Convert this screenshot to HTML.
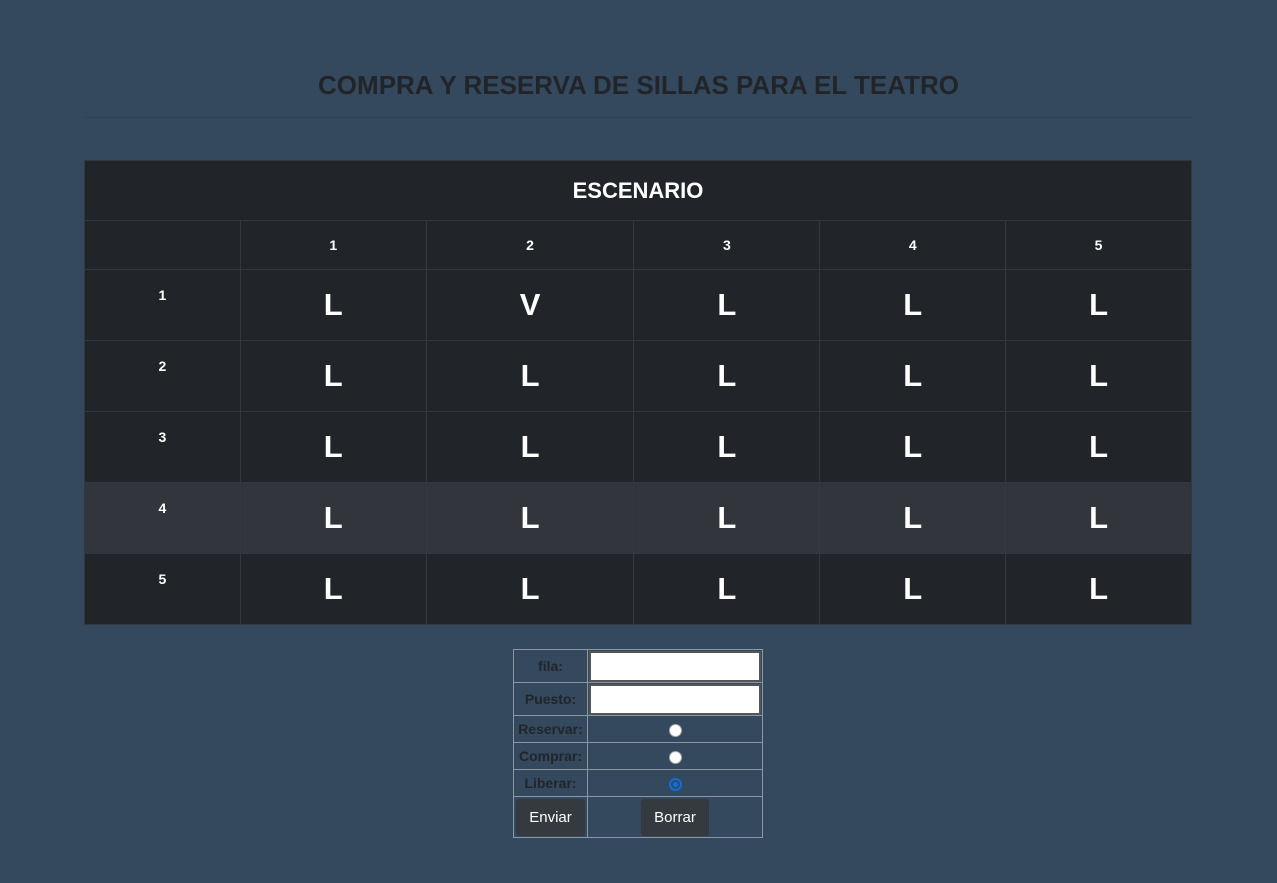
<!DOCTYPE html>
<html><head><meta charset="utf-8"><style>
html,body{margin:0;padding:0;background:#34495e;width:1277px;height:883px;overflow:hidden;font-family:"Liberation Sans",sans-serif;}
.title{position:absolute;left:0;width:1277px;top:70px;text-align:center;font-weight:bold;font-size:26px;color:#212529;}
.title span{display:inline-block;white-space:nowrap;}
.hr{position:absolute;left:84px;width:1108px;top:117px;height:1px;background:#2e4155;}
table{border-collapse:collapse;}
.main{position:absolute;left:84px;top:160px;width:1108px;background:#212529;color:#fff;}
.main td{border:1px solid #32383e;text-align:center;padding:0;}
.main .esc{height:59px;font-size:22px;font-weight:bold;}
.main .nums td{height:48px;font-weight:bold;font-size:14px;}
.main .r td{height:70px;font-size:31px;font-weight:bold;}
.main .r td.lbl{font-size:14px;vertical-align:top;padding-top:17px;height:53px;}
.main tr.hov{background:#32353b;}
.form{position:absolute;left:513px;top:649px;width:250px;color:#212529;font-weight:bold;font-size:14px;}
.form td{border:1px solid #8a97a5;padding:0;text-align:center;}
.form input[type=text]{display:block;width:172px;height:31px;box-sizing:border-box;border:2px solid #555;background:#fff;margin:0 0 0 1px;}
.rad{display:inline-block;width:11px;height:11px;border-radius:50%;background:#fff;border:1px solid #aaa;vertical-align:middle;}
.rad.on{border:2px solid #0b6fe0;width:5px;height:5px;box-shadow:0 0 0 0 #fff;background:#fff;padding:2px;background-clip:content-box;background-color:#0b6fe0;}
.btn{display:inline-block;background:#343a40;color:#fff;font-weight:normal;font-size:15px;border-radius:3px;padding:10px 13px;}
</style></head><body>
<div class="title"><span>COMPRA Y RESERVA DE SILLAS PARA EL TEATRO</span></div>
<div class="hr"></div>
<table class="main">
<colgroup><col style="width:156px"><col style="width:186px"><col style="width:208px"><col style="width:186px"><col style="width:186px"><col style="width:186px"></colgroup>
<tr><td colspan="6" class="esc">ESCENARIO</td></tr>
<tr class="nums"><td></td><td>1</td><td>2</td><td>3</td><td>4</td><td>5</td></tr>
<tr class="r"><td class="lbl">1</td><td>L</td><td>V</td><td>L</td><td>L</td><td>L</td></tr>
<tr class="r"><td class="lbl">2</td><td>L</td><td>L</td><td>L</td><td>L</td><td>L</td></tr>
<tr class="r"><td class="lbl">3</td><td>L</td><td>L</td><td>L</td><td>L</td><td>L</td></tr>
<tr class="r hov"><td class="lbl">4</td><td>L</td><td>L</td><td>L</td><td>L</td><td>L</td></tr>
<tr class="r"><td class="lbl">5</td><td>L</td><td>L</td><td>L</td><td>L</td><td>L</td></tr>
</table>
<table class="form">
<colgroup><col style="width:74px"><col style="width:175px"></colgroup>
<tr style="height:33px"><td>fila:</td><td><input type="text"></td></tr>
<tr style="height:33px"><td>Puesto:</td><td><input type="text"></td></tr>
<tr style="height:27px"><td>Reservar:</td><td><span class="rad"></span></td></tr>
<tr style="height:27px"><td>Comprar:</td><td><span class="rad"></span></td></tr>
<tr style="height:27px"><td>Liberar:</td><td><span class="rad on"></span></td></tr>
<tr style="height:41px"><td><span class="btn">Enviar</span></td><td><span class="btn">Borrar</span></td></tr>
</table>
</body></html>
